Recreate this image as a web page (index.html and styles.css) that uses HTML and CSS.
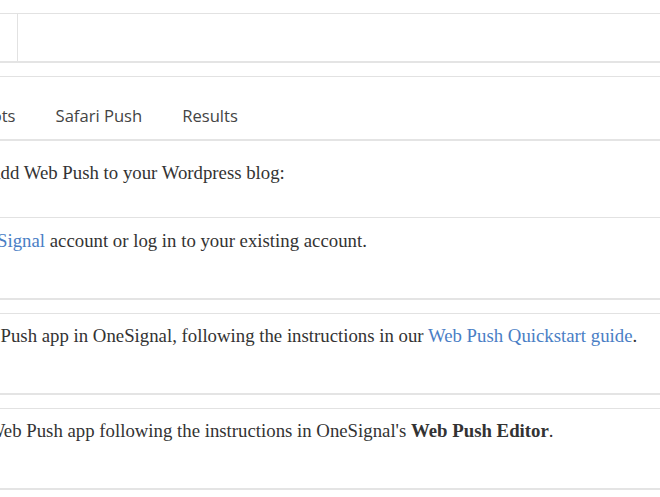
FILE: index.html
```html
<!DOCTYPE html>
<html lang="en">
<head>
    <title>Web Push for Wordpress</title>
    <meta charset="UTF-8">
    <link rel="stylesheet" href="styles.css">
</head>
<body>
    <div id="page">
        <div class="card toolbar">
            <div class="toolbar-side"></div>
            <div class="toolbar-main"></div>
        </div>

        <div class="card">
            <nav class="tabs">
                <a href="#">Screenshots</a>
                <a href="#">Safari Push</a>
                <a href="#">Results</a>
            </nav>
            <p class="intro">Add Web Push to your Wordpress blog:</p>
            <div class="step step-first step-1">
                <p>Create a <a href="#">OneSignal</a> account or log in to your existing account.</p>
            </div>
        </div>

        <div class="card step step-2">
            <p>Set up a Web Push app in OneSignal, following the instructions in our <a href="#">Web Push Quickstart guide</a>.</p>
        </div>

        <div class="card step step-3">
            <p>Configure your Web Push app following the instructions in OneSignal's <b>Web Push Editor</b>.</p>
        </div>
    </div>
</body>
</html>
```

FILE: styles.css
```css
html, body {
    margin: 0;
    padding: 0;
    background: #fff;
    overflow: hidden;
}

body {
    font-family: "Liberation Serif", serif;
    font-size: 18.8px;
    color: #333;
}

/* the page is scrolled sideways, so the left part is off screen */
#page {
    padding-top: 13px;
    margin-left: -150px;
    width: 830px;
}

a {
    color: #4a7ec5;
    text-decoration: none;
}

.card {
    background: #fff;
    border-top: 1px solid #e2e2e2;
    border-bottom: 2px solid #e4e4e4;
    margin-bottom: 13px;
}

.toolbar {
    display: flex;
    height: 47px;
}

.toolbar-side {
    width: 167px;
    border-right: 1px solid #e2e2e2;
}

.toolbar-main {
    flex: 1;
}

.tabs {
    display: flex;
    padding: 28px 0 12px 71px;
    border-bottom: 2px solid #e4e4e4;
    font-family: "Open Sans", sans-serif;
    font-size: 16.6px;
    line-height: 22px;
}

.tabs a {
    color: #444;
    margin-right: 40px;
}

p {
    margin: 0;
    line-height: 26px;
    white-space: nowrap;
}

.intro {
    padding: 19px 0 31px 137px;
}

.step {
    padding: 9px 0 44px 0;
}

.step-first {
    border-top: 1px solid #e2e2e2;
    padding-top: 10px;
}

.step-1 {
    padding-left: 49px;
}

.step-2 {
    padding-left: 47px;
}

.step-3 {
    padding-left: 18px;
}
```
